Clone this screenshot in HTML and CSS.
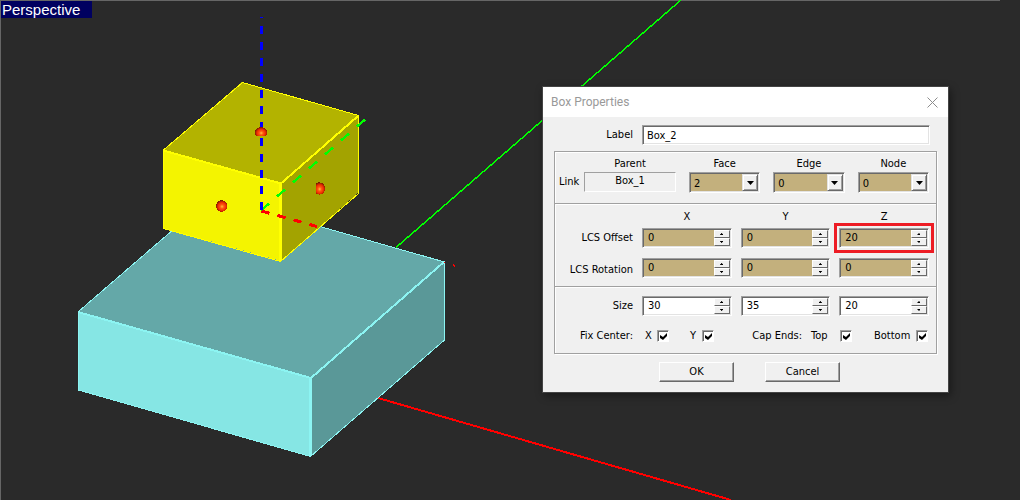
FILE: index.html
```html
<!DOCTYPE html>
<html lang="en">
<head>
<meta charset="utf-8">
<title>Box Properties</title>
<link rel="stylesheet" href="styles.css">
</head>
<body>
<main class="viewport">
  <svg class="scene" viewBox="0 0 1020 500" preserveAspectRatio="xMinYMin meet" shape-rendering="crispEdges" aria-hidden="true">
    <defs>
      <radialGradient id="ball" cx="0.52" cy="0.55" r="0.55">
        <stop offset="0" stop-color="#ffc03c"/>
        <stop offset="0.3" stop-color="#ff5a10"/>
        <stop offset="0.65" stop-color="#ee2c00"/>
        <stop offset="1" stop-color="#6e1a00"/>
      </radialGradient>
      <clipPath id="upper"><rect x="250" y="120" width="22" height="16"/></clipPath>
      <clipPath id="rightpart"><rect x="316" y="178" width="20" height="22"/></clipPath>
    </defs>
    <path d="M0 .5H1000M.5 0V500" stroke="#666" fill="none"/>
    <path d="M681 0 396 247.500" stroke="#0f0" stroke-width="1.500"/>
    <path d="M378 398 731 500" stroke="#f00" stroke-width="2"/>
    <path d="M78 311.500 174 229 320 226 444 262 311 378Z" fill="#64a8a8"/>
    <path d="M78 312 311 378V456.500L78 390Z" fill="#86e6e4"/>
    <path d="M311 378 444 262V340L311 456.500Z" fill="#5a9898"/>
    <g fill="none" stroke="#8cf4f2">
      <path d="M174 229 78.500 311.500V390L310.500 456.500 444.500 340V262L320 226.500"/>
      <path d="M78 312 311 378 444 262" stroke-width="2"/>
      <path d="M310.500 378V456" stroke-width="3"/>
    </g>
    <path d="M444 262h1v1h-1zM453 264h1v1h1v2h-1v-1h-1z" fill="#f00"/>
    <path d="M163.500 150 242 82 358 115 281 183Z" fill="#b3b300"/>
    <path d="M163.500 150 281 183V261L163.500 228Z" fill="#f4f400"/>
    <path d="M281 183 358 115V193L281 261Z" fill="#a3a300"/>
    <g fill="none" stroke="#ff0">
      <path d="M163.500 150 242.500 82.500 358.500 115.500V193.500L280.500 261.500 163.500 228.500V150"/>
      <path d="M163.500 150.500 281 183.500 358 116" stroke-width="2"/>
      <path d="M280.500 183V261" stroke-width="3"/>
    </g>
    <g fill="none" stroke-width="3">
      <path d="M261 210.500 365 119.500" stroke="#0f0" stroke-width="2.500" stroke-dasharray="10.630 10.630"/>
      <path d="M261.500 211 317 226.500" stroke="#f00" stroke-dasharray="8.300 8.300"/>
      <path d="M261.500 210V17" stroke="#00f" stroke-dasharray="8 8"/>
    </g>
    <g fill="url(#ball)">
      <ellipse cx="261" cy="132.500" rx="6" ry="5.500" clip-path="url(#upper)"/>
      <circle cx="221.800" cy="206" r="5.800"/>
      <ellipse cx="319.500" cy="188.500" rx="5.500" ry="6.200" clip-path="url(#rightpart)"/>
    </g>
  </svg>
  <div class="view-name">Perspective</div>

  <form class="dialog" role="dialog" aria-labelledby="title">
    <header class="titlebar">
      <h1 class="title" id="title">Box Properties</h1>
      <button class="close" type="button" aria-label="Close">
        <svg width="11" height="11" viewBox="0 0 11 11"><path d="M.5.500 10.500 10.500M10.500.500.500 10.500" stroke="#8c8c8c" fill="none"/></svg>
      </button>
    </header>
    <div class="body">
      <div class="label-row">
        <label class="row-label" for="label">Label</label>
        <input class="field" id="label" type="text" value="Box_2">
      </div>

      <section class="group link-group">
        <span class="link-label">Link</span>
        <div class="link-grid">
          <span class="head" id="parent-head">Parent</span>
          <label class="head" for="face">Face</label>
          <label class="head" for="edge">Edge</label>
          <label class="head" for="node">Node</label>
          <output class="parent" aria-labelledby="parent-head">Box_1</output>
          <div class="combo"><select id="face"><option>2</option></select><span class="drop"><svg width="7" height="4" viewBox="0 0 7 4"><path d="M0 0h7L3.500 4z"/></svg></span></div>
          <div class="combo"><select id="edge"><option>0</option></select><span class="drop"><svg width="7" height="4" viewBox="0 0 7 4"><path d="M0 0h7L3.500 4z"/></svg></span></div>
          <div class="combo"><select id="node"><option>0</option></select><span class="drop"><svg width="7" height="4" viewBox="0 0 7 4"><path d="M0 0h7L3.500 4z"/></svg></span></div>
        </div>
      </section>

      <section class="group lcs-group">
        <span></span>
        <span class="head">X</span>
        <span class="head">Y</span>
        <span class="head">Z</span>
        <span class="row-label">LCS Offset</span>
        <div class="spin tan"><input type="text" value="0" aria-label="LCS Offset X"><span class="steps"><button type="button" class="up" aria-label="Increase"></button><button type="button" class="down" aria-label="Decrease"></button></span></div>
        <div class="spin tan"><input type="text" value="0" aria-label="LCS Offset Y"><span class="steps"><button type="button" class="up" aria-label="Increase"></button><button type="button" class="down" aria-label="Decrease"></button></span></div>
        <div class="spin tan marked"><input type="text" value="20" aria-label="LCS Offset Z"><span class="steps"><button type="button" class="up" aria-label="Increase"></button><button type="button" class="down" aria-label="Decrease"></button></span></div>
        <span class="row-label low">LCS Rotation</span>
        <div class="spin tan"><input type="text" value="0" aria-label="LCS Rotation X"><span class="steps"><button type="button" class="up" aria-label="Increase"></button><button type="button" class="down" aria-label="Decrease"></button></span></div>
        <div class="spin tan"><input type="text" value="0" aria-label="LCS Rotation Y"><span class="steps"><button type="button" class="up" aria-label="Increase"></button><button type="button" class="down" aria-label="Decrease"></button></span></div>
        <div class="spin tan"><input type="text" value="0" aria-label="LCS Rotation Z"><span class="steps"><button type="button" class="up" aria-label="Increase"></button><button type="button" class="down" aria-label="Decrease"></button></span></div>
      </section>

      <section class="group size-group">
        <span class="row-label">Size</span>
        <div class="spin"><input type="text" value="30" aria-label="Size X"><span class="steps"><button type="button" class="up" aria-label="Increase"></button><button type="button" class="down" aria-label="Decrease"></button></span></div>
        <div class="spin"><input type="text" value="35" aria-label="Size Y"><span class="steps"><button type="button" class="up" aria-label="Increase"></button><button type="button" class="down" aria-label="Decrease"></button></span></div>
        <div class="spin"><input type="text" value="20" aria-label="Size Z"><span class="steps"><button type="button" class="up" aria-label="Increase"></button><button type="button" class="down" aria-label="Decrease"></button></span></div>
        <span class="row-label">Fix Center:</span>
        <div class="checks">
          <div class="check-set">
            <label class="check narrow">X<input type="checkbox" checked></label>
            <label class="check narrow">Y<input type="checkbox" checked></label>
          </div>
          <div class="check-set caps">
            <span>Cap Ends:</span>
            <label class="check medium">Top<input type="checkbox" checked></label>
          </div>
          <label class="check wide">Bottom<input type="checkbox" checked></label>
        </div>
      </section>

      <div class="actions">
        <button class="push" type="button">OK</button>
        <button class="push" type="button">Cancel</button>
      </div>
    </div>
  </form>
</main>
</body>
</html>
```
FILE: styles.css
```css
* { box-sizing: border-box; }

body {
  margin: 0;
  background: #2a2a2a;
  color: #000;
  font: 11px/16px "DejaVu Sans Condensed", "Noto Sans", sans-serif;
}

.viewport {
  position: relative;
  min-height: 100vh;
  overflow: hidden;
}

.scene { display: block; width: 100%; }

.view-name {
  position: absolute;
  left: 1px;
  top: 1px;
  padding: 0 12px 0 1px;
  background: #000060;
  color: #fff;
  font: 15px/17px "Liberation Sans", Arial, sans-serif;
}

.dialog {
  position: absolute;
  left: 543px;
  top: 87px;
  width: 405px;
  background: #f0f0f0;
  box-shadow: 0 0 0 1px #444, 2px 3px 8px 1px rgba(0, 0, 0, .4);
}

.titlebar {
  display: flex;
  align-items: center;
  justify-content: space-between;
  height: 30px;
  padding: 0 10px 0 8px;
  background: #fff;
}

.title {
  margin: 0;
  color: #999;
  font: 12px/16px Roboto, "Noto Sans", sans-serif;
}

.close {
  display: flex;
  padding: 0;
  border: 0;
  background: none;
}

.body { padding: 8px 11px 10px; }

input, select, button { margin: 0; font: inherit; color: inherit; }

input[type="text"] { min-width: 0; outline: 0; }

.label-row, .lcs-group, .size-group {
  display: grid;
  grid-template-columns: 78px repeat(3, minmax(0, 1fr));
  column-gap: 9px;
  align-items: center;
}

.label-row { padding: 0 7px 0 1px; }

.field { grid-column: 2 / -1; }

.field, .spin, .combo {
  height: 20px;
  border: 1px solid;
  border-color: #a0a0a0 #fff #fff #a0a0a0;
  background: #fff;
  box-shadow: inset 1px 1px #696969, inset -1px -1px #e3e3e3;
}

.field { padding: 0 4px; }

.row-label { text-align: right; }

.group {
  border: 1px solid #a0a0a0;
  box-shadow: 1px 1px #fff, inset 1px 1px #fff;
}

.group + .group { margin-top: -1px; }

.head { height: 16px; text-align: center; }

.link-group {
  display: flex;
  align-items: flex-end;
  margin-top: 6px;
  padding: 4px 7px 10px 4px;
}

.link-label { width: 25px; padding-bottom: 3px; }

.link-grid {
  display: grid;
  flex: 1;
  grid-template-columns: 92px repeat(3, 1fr);
  column-gap: 13px;
}

.parent {
  height: 20px;
  border: 1px solid;
  border-color: #a0a0a0 #fff #fff #a0a0a0;
  text-align: center;
}

.combo { position: relative; height: 21px; background: #c3b07d; }

.combo select {
  display: block;
  width: 100%;
  height: 19px;
  padding: 2px 20px 0 4px;
  border: 0;
  background: none;
  appearance: none;
}

.drop {
  position: absolute;
  top: 1px;
  right: 1px;
  bottom: 1px;
  display: flex;
  align-items: center;
  justify-content: center;
  width: 16px;
  border: 1px solid;
  border-color: #e3e3e3 #696969 #696969 #e3e3e3;
  background: #f0f0f0;
  box-shadow: inset 1px 1px #fff, inset -1px -1px #a0a0a0;
  pointer-events: none;
}

.lcs-group { padding: 5px 7px 8px 0; }

.lcs-group .head { margin-bottom: 3px; }

.lcs-group .spin { margin-bottom: 10px; }

.lcs-group .row-label { margin-bottom: 10px; }

.lcs-group .spin:nth-last-child(-n + 3) { margin-bottom: 0; }

.lcs-group .low { margin-bottom: 0; padding-top: 4px; }

.spin {
  display: flex;
  padding: 1px;
}

.tan { background: #c3b07d; }

.marked { outline: 3px solid #ed1c24; outline-offset: 2px; }

.spin input {
  flex: 1;
  width: 100%;
  padding: 0 4px;
  border: 0;
  background: none;
}

.steps { display: flex; flex: none; flex-direction: column; width: 16px; }

.steps button {
  display: flex;
  flex: 1;
  align-items: center;
  justify-content: center;
  padding: 0;
  border: 1px solid;
  border-color: #fff #696969 #696969 #fff;
  background: #f0f0f0;
}

.up::before, .down::before {
  content: "";
  width: 3px;
  height: 2px;
  background: #000;
}

.up::before { clip-path: polygon(1px 0, 2px 0, 2px 1px, 3px 1px, 3px 2px, 0 2px, 0 1px, 1px 1px); }

.down::before { clip-path: polygon(0 0, 3px 0, 3px 1px, 2px 1px, 2px 2px, 1px 2px, 1px 1px, 0 1px); }

.size-group { row-gap: 10px; padding: 9px 7px 7px 0; }

.checks {
  display: flex;
  grid-column: 2 / -1;
  align-items: center;
  height: 20px;
  padding: 0 1px 0 3px;
}

.check-set { display: flex; gap: 21px; }

.caps { gap: 9px; margin: 0 22px 0 auto; }

.check { display: flex; align-items: center; justify-content: space-between; }

.narrow { width: 24px; }
.medium { width: 41px; }
.wide { width: 54px; }

.check input {
  flex: none;
  width: 12px;
  height: 12px;
  border: 1px solid;
  border-color: #a0a0a0 #fff #fff #a0a0a0;
  background: #fff;
  box-shadow: inset 1px 1px #696969;
  appearance: none;
}

.check input:checked::before {
  content: "";
  display: block;
  width: 7px;
  height: 7px;
  margin: 2px;
  background: #000;
  clip-path: polygon(0 2px, 3px 4px, 7px 0, 7px 3px, 3px 7px, 0 5px);
}

.actions {
  display: flex;
  justify-content: center;
  gap: 31px;
  padding: 8px 0 0 8px;
}

.push {
  width: 75px;
  height: 20px;
  padding: 0;
  border: 1px solid;
  border-color: #fff #696969 #696969 #fff;
  background: #f0f0f0;
  box-shadow: inset -1px -1px #a0a0a0;
}
```
